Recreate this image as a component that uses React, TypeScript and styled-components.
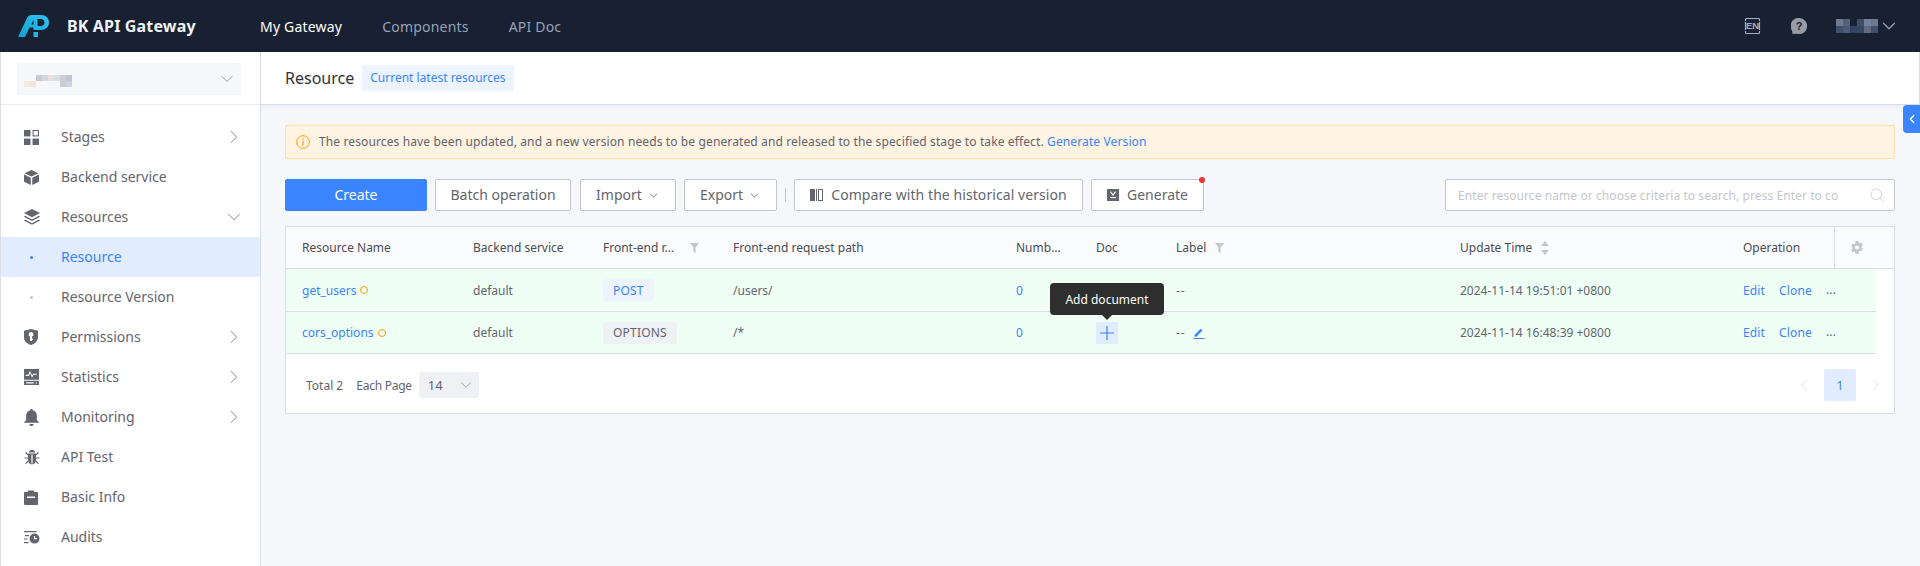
import React from "react";
import styled, { createGlobalStyle } from "styled-components";
import { ChevronDown, ChevronLeft, ChevronRight, Search } from "lucide-react";

const FONT = `"Noto Sans", "Noto Sans CJK SC", sans-serif`;

const Global = createGlobalStyle`
  html, body { margin: 0; padding: 0; height: 100%; overflow: hidden; background: #f5f7fa; }
  * { box-sizing: border-box; }
  body { font-family: ${FONT}; font-size: 14px; color: #63656e; }
`;

const Page = styled.div`
  display: flex;
  flex-direction: column;
  width: 1920px;
  height: 566px;
  overflow: hidden;
`;

const Header = styled.header`
  flex: 0 0 52px;
  display: flex;
  align-items: center;
  padding: 0 20px 0 18px;
  background: #182132;
`;

const LogoBox = styled.div`
  display: flex;
  align-items: center;
  width: 242px;
  gap: 18px;
`;

const Brand = styled.span`
  font-size: 16px;
  font-weight: 700;
  letter-spacing: 0.15px;
  color: #f0f3f8;
  white-space: nowrap;
`;

const Nav = styled.nav`
  display: flex;
  gap: 40px;
`;

const NavItem = styled.span<{ $active?: boolean }>`
  font-size: 14px;
  letter-spacing: 0.2px;
  color: ${(p) => (p.$active ? "#ffffff" : "#96a2b9")};
`;

const HeaderRight = styled.div`
  margin-left: auto;
  display: flex;
  align-items: center;
  color: #96a2b9;
`;

const Body = styled.div`
  flex: 1;
  display: flex;
  min-height: 0;
`;

const Sidebar = styled.aside`
  flex: 0 0 261px;
  background: #fff;
  border-left: 1px solid #dcdee5;
  border-right: 1px solid #dcdee5;
  display: flex;
  flex-direction: column;
`;

const GatewayPick = styled.div`
  height: 53px;
  padding: 11px 19px 0 16px;
  border-bottom: 1px solid #eaebf0;
`;

const GatewaySelect = styled.div`
  height: 32px;
  background: #f5f7fa;
  border-radius: 2px;
  display: flex;
  align-items: center;
  justify-content: space-between;
  padding: 0 4px 0 7px;
  color: #979ba5;
`;

const Menu = styled.ul`
  list-style: none;
  margin: 0;
  padding: 12px 0 0;
`;

const MenuRow = styled.li<{ $active?: boolean }>`
  height: 40px;
  display: flex;
  align-items: center;
  padding: 0 15px 0 23px;
  background: ${(p) => (p.$active ? "#e1ecff" : "transparent")};
  color: ${(p) => (p.$active ? "#3a84ff" : "#63656e")};
  font-size: 14px;
`;

const MenuIcon = styled.span`
  flex: 0 0 37px;
  display: flex;
  align-items: center;
  height: 16px;
`;

const Dot = styled.i<{ $active?: boolean }>`
  display: block;
  width: 3px;
  height: 3px;
  margin-left: 6px;
  border-radius: 50%;
  background: ${(p) => (p.$active ? "#3a84ff" : "#c4c6cc")};
`;

const MenuLabel = styled.span`
  flex: 1;
  padding-bottom: 2px;
`;

const MenuCaret = styled.span`
  display: flex;
  color: #979ba5;
`;

const Main = styled.main`
  flex: 1;
  min-width: 0;
  display: flex;
  flex-direction: column;
  position: relative;
`;

const TitleBar = styled.div`
  height: 53px;
  flex: none;
  background: #fff;
  border-bottom: 1px solid #dcdee5;
  border-right: 1px solid #dcdee5;
  box-shadow: 0 3px 4px rgba(64, 112, 203, 0.06);
  display: flex;
  align-items: center;
  padding: 0 0 1px 24px;
  gap: 8px;
`;

const PageTitle = styled.h1`
  margin: 0;
  font-size: 16px;
  font-weight: 400;
  color: #313238;
`;

const TitleTag = styled.span`
  height: 26px;
  display: flex;
  align-items: center;
  padding: 0 8px;
  background: #edf4ff;
  border-radius: 2px;
  font-size: 12px;
  color: #3a84ff;
`;

const CollapseTab = styled.div`
  position: absolute;
  top: 53px;
  right: 0;
  width: 17px;
  height: 28px;
  background: #3a84ff;
  border-radius: 4px 0 0 4px;
  display: flex;
  align-items: center;
  justify-content: center;
  color: #fff;
`;

const Content = styled.div`
  padding: 20px 25px 0 24px;
  display: flex;
  flex-direction: column;
`;

const Alert = styled.div`
  height: 34px;
  display: flex;
  align-items: center;
  gap: 9px;
  padding: 0 10px;
  background: #fff3e1;
  border: 1px solid #ffdfac;
  border-radius: 2px;
  font-size: 12px;
  letter-spacing: 0.12px;
`;

const AlertText = styled.span`
  padding-bottom: 1px;
`;

const TextLink = styled.span`
  color: #3a84ff;
`;

const Toolbar = styled.div`
  display: flex;
  align-items: center;
  margin-top: 20px;
  gap: 8px;
`;

const Btn = styled.button<{ $primary?: boolean; $w: number; $nudge?: number; $track?: number }>`
  position: relative;
  width: ${(p) => p.$w}px;
  margin-left: ${(p) => p.$nudge ?? 0}px;
  height: 32px;
  padding: 0 0 2px;
  display: flex;
  align-items: center;
  justify-content: center;
  gap: 5px;
  font: inherit;
  font-size: 14px;
  letter-spacing: ${(p) => p.$track ?? 0}px;
  border-radius: 2px;
  border: 1px solid ${(p) => (p.$primary ? "#3a84ff" : "#c4c6cc")};
  background: ${(p) => (p.$primary ? "#3a84ff" : "#fff")};
  color: ${(p) => (p.$primary ? "#fff" : "#63656e")};
`;

const BtnCaret = styled(ChevronDown)`
  margin-top: 2px;
`;

const BtnGlyph = styled.svg`
  margin-right: 3px;
  margin-top: 2px;
`;

const RedDot = styled.i`
  position: absolute;
  top: -3px;
  right: -2px;
  width: 6px;
  height: 6px;
  border-radius: 50%;
  background: #ea3636;
`;

const Divider = styled.i`
  width: 1px;
  height: 14px;
  background: #c4c6cc;
`;

const SearchBox = styled.div`
  margin-left: auto;
  width: 450px;
  height: 32px;
  display: flex;
  align-items: center;
  justify-content: space-between;
  padding: 0 9px 0 12px;
  background: #fff;
  border: 1px solid #c4c6cc;
  border-radius: 2px;
  font-size: 12px;
  letter-spacing: 0.08px;
  color: #c4c6cc;
  white-space: nowrap;
`;

const Table = styled.section`
  margin-top: 15px;
  background: #fff;
  border: 1px solid #dcdee5;
`;

const COLS = "171px 130px 130px 283px 80px 80px 284px 283px";

const HeadRow = styled.div`
  display: grid;
  grid-template-columns: ${COLS} 107px 60px;
  height: 42px;
  background: #fafbfd;
  border-bottom: 1px solid #dcdee5;
  font-size: 12px;
  color: #313238;
`;

const DataRow = styled.div<{ $h: number }>`
  display: grid;
  grid-template-columns: ${COLS} 149px;
  width: 1590px;
  height: ${(p) => p.$h}px;
  background: #f0fff5;
  border-bottom: 1px solid #dcdee5;
  font-size: 12px;
  position: relative;
`;

const Cell = styled.div`
  display: flex;
  align-items: center;
  padding-left: 16px;
  gap: 4px;
  min-width: 0;
  white-space: nowrap;
`;

const HeadCell = styled(Cell)`
  color: #4a4c53;
  gap: 0;
`;

const HeadFilter = styled.span<{ $gap: number }>`
  margin-left: ${(p) => p.$gap}px;
  display: flex;
`;

const HeadSort = styled.svg`
  margin-left: 8px;
`;

const GearCell = styled.div`
  display: flex;
  align-items: center;
  justify-content: center;
  border-left: 1px solid #dcdee5;
  padding-right: 16px;
`;

const StatusRing = styled.i`
  display: block;
  width: 8px;
  height: 8px;
  border: 1.5px solid #ff9c01;
  border-radius: 50%;
`;

const MethodTag = styled.span<{ $blue?: boolean }>`
  height: 22px;
  display: flex;
  align-items: center;
  padding: 0 10px;
  border-radius: 2px;
  letter-spacing: 0.2px;
  background: ${(p) => (p.$blue ? "#edf4ff" : "#f0f1f5")};
  color: ${(p) => (p.$blue ? "#3a84ff" : "#63656e")};
`;

const AddDoc = styled.span`
  width: 22px;
  height: 22px;
  background: #e1ecff;
  display: flex;
  align-items: center;
  justify-content: center;
`;

const Dashes = styled.span`
  letter-spacing: 1px;
`;

const EditGlyph = styled.svg`
  margin-left: 3px;
`;

const Tip = styled.div`
  position: absolute;
  left: 764px;
  top: -29px;
  width: 114px;
  height: 32px;
  display: flex;
  align-items: center;
  justify-content: center;
  background: #2e2e2e;
  border-radius: 4px;
  color: #fff;
  font-size: 12px;
  z-index: 2;
  &::after {
    content: "";
    position: absolute;
    left: 52px;
    bottom: -5px;
    border-left: 5px solid transparent;
    border-right: 5px solid transparent;
    border-top: 5px solid #2e2e2e;
  }
`;

const OpLinks = styled.div`
  display: flex;
  align-items: center;
  gap: 14px;
  letter-spacing: 0.15px;
  color: #3a84ff;
`;

const More = styled.span`
  color: #63656e;
  margin-top: -2px;
`;

const Pager = styled.div`
  height: 59px;
  display: flex;
  align-items: center;
  padding: 3px 8px 0 20px;
  font-size: 12px;
`;

const PerPage = styled.span`
  margin-left: 13px;
  letter-spacing: -0.25px;
`;

const PageSelect = styled.div`
  margin-left: 7px;
  width: 60px;
  height: 26px;
  background: #f0f1f5;
  border-radius: 2px;
  display: flex;
  align-items: center;
  justify-content: space-between;
  padding: 0 4px 0 9px;
  color: #63656e;
  font-size: 13px;
`;

const PageNav = styled.div`
  margin-left: auto;
  display: flex;
  align-items: center;
  gap: 10px;
  color: #dcdee5;
`;

const PageNum = styled.span`
  width: 32px;
  height: 32px;
  display: flex;
  align-items: center;
  justify-content: center;
  background: #e1ecff;
  border-radius: 2px;
  color: #3a84ff;
  font-size: 12px;
`;

const UserMosaic = styled.svg`
  margin-left: 29px;
`;

const HelpIcon = styled.svg`
  margin-left: 30px;
`;

const c = "#63656e";

const Icons: Record<string, React.ReactNode> = {
  stages: (
    <svg width="15" height="15" viewBox="0 0 14 14">
      <rect x="0" y="0" width="6" height="6" fill={c} />
      <rect x="8.5" y="0.5" width="5" height="5" fill="none" stroke={c} />
      <rect x="0" y="8" width="6" height="6" fill={c} />
      <rect x="8" y="8" width="6" height="6" fill={c} />
    </svg>
  ),
  backend: (
    <svg width="15" height="15" viewBox="0 0 14 14">
      <path d="M7 0 13.5 3 7 6 .5 3Z" fill={c} />
      <path d="M0 4.3 6.3 7.2V14L0 11Z" fill={c} />
      <path d="M14 4.3 7.7 7.2V14L14 11Z" fill={c} />
    </svg>
  ),
  resources: (
    <svg width="16" height="16" viewBox="0 0 14 14">
      <path d="M7 0 14 3.6 7 7.2 0 3.6Z" fill={c} />
      <path d="M1 6 7 9.2 13 6 14 6.8 7 10.6 0 6.8Z" fill={c} />
      <path d="M1 9.2 7 12.4 13 9.2 14 10 7 13.8 0 10Z" fill={c} />
    </svg>
  ),
  permissions: (
    <svg width="14" height="16" viewBox="0 0 14 16">
      <path fillRule="evenodd" d="M7 0 14 1.8V8c0 4-3 6.6-7 8-4-1.4-7-4-7-8V1.8ZM7 3a2.4 2.4 0 0 0-1 4.6V12h2v-1h1V9.5H8V7.6A2.4 2.4 0 0 0 7 3Z" fill={c} />
    </svg>
  ),
  statistics: (
    <svg width="15" height="16" viewBox="0 0 14 15">
      <path fillRule="evenodd" d="M0 0h14v10H0ZM1.5 5.5v1h3l1.2-2.4 1.8 4 1.5-2.6h3v-1H8.5l-.9 1.5-2-4.2L3.8 5.5Z" fill={c} />
      <path fillRule="evenodd" d="M0 11h14v4H0Zm2 1.5v1h7v-1Zm9 0v1h1v-1Z" fill={c} />
    </svg>
  ),
  monitoring: (
    <svg width="15" height="17" viewBox="0 0 14 16">
      <path d="M7 0c.7 0 1.2.5 1.2 1.1C10.6 1.7 12 3.7 12 6v4.4l2 2.1V13H0v-.5l2-2.1V6c0-2.3 1.4-4.3 3.8-4.9C5.8.5 6.3 0 7 0Z" fill={c} />
      <path d="M5 14h4c0 1.2-1 2-2 2s-2-.8-2-2Z" fill={c} />
    </svg>
  ),
  test: (
    <svg width="16" height="16" viewBox="0 0 16 16">
      <path d="M5 3.6C5 1.8 6.3.8 8 .8s3 1 3 2.8Z" fill={c} />
      <path fillRule="evenodd" d="M4 4.6h8V11c0 2.7-1.8 4.4-4 4.4S4 13.7 4 11Zm3.4 1v9h1.2v-9Z" fill={c} />
      <path d="M4 5.8 1.5 3.5M12 5.8l2.5-2.3M4 9H.5M12 9h3.5M4.3 12 1.5 14.6M11.7 12l2.8 2.6" stroke={c} strokeWidth="1.2" fill="none" />
    </svg>
  ),
  info: (
    <svg width="14" height="15" viewBox="0 0 14 15">
      <path fillRule="evenodd" d="M1 2h3V.5h6V2h3a1 1 0 0 1 1 1v11a1 1 0 0 1-1 1H1a1 1 0 0 1-1-1V3a1 1 0 0 1 1-1Zm2 4.5V8h8V6.5Z" fill={c} />
    </svg>
  ),
  audits: (
    <svg width="16" height="15" viewBox="0 0 16 15">
      <path d="M0 1h12.5v1.2H0ZM1 5h4v1.2H1ZM0 8.4h3.6v1.2H0ZM0 12h4.5v1.2H0Z" fill={c} />
      <path fillRule="evenodd" d="M10.5 3.6a5 5 0 1 1 0 10 5 5 0 0 1 0-10ZM10 6v3.2h3V8.1h-2V6Z" fill={c} />
    </svg>
  ),
};

type MenuDef = { key?: string; label: string; caret?: "right" | "down"; sub?: boolean; active?: boolean };

const menu: MenuDef[] = [
  { key: "stages", label: "Stages", caret: "right" },
  { key: "backend", label: "Backend service" },
  { key: "resources", label: "Resources", caret: "down" },
  { label: "Resource", sub: true, active: true },
  { label: "Resource Version", sub: true },
  { key: "permissions", label: "Permissions", caret: "right" },
  { key: "statistics", label: "Statistics", caret: "right" },
  { key: "monitoring", label: "Monitoring", caret: "right" },
  { key: "test", label: "API Test" },
  { key: "info", label: "Basic Info" },
  { key: "audits", label: "Audits" },
];

const Logo = () => (
  <svg width="31" height="22" viewBox="0 0 31 22">
    <defs>
      <linearGradient id="lg" x1="0" y1="1" x2="1" y2="0">
        <stop offset="0" stopColor="#0f9fd2" />
        <stop offset="1" stopColor="#32c4f4" />
      </linearGradient>
    </defs>
    <path
      fillRule="evenodd"
      d="M0 22 9 3C10 1 11.5 0 13.5 0H23C28 0 31 3 31 7.5 31 12 27.5 15 23 15H19.5V11H22.5C25 11 26.5 9.5 26.5 7.5 26.5 5.5 25 4 22.5 4H19.5V15H15.5V12.5H11.5L7 22ZM15.5 5V9.5H13.3Z"
      fill="url(#lg)"
    />
    <rect x="15.5" y="17" width="4.5" height="5" fill="#22b5e8" />
  </svg>
);

const mosaic = (cells: [number, number, string][], s: number) =>
  cells.map(([x, y, f], i) => <rect key={i} x={x * s} y={y * s} width={s} height={s} fill={f} />);

const Filter = () => (
  <svg width="9" height="10" viewBox="0 0 9 10">
    <path d="M0 0h9L5.6 4.5V10L3.4 8.6V4.5Z" fill="#c4c6cc" />
  </svg>
);

const Edit = () => (
  <EditGlyph width="12" height="12" viewBox="0 0 12 12">
    <path d="M1.5 8 7.6 1.8 9.4 3.6 3.3 9.8H1.5Z" fill="#3a84ff" />
    <rect x="0.5" y="11" width="11" height="1" fill="#3a84ff" />
  </EditGlyph>
);

const columns = ["Resource Name", "Backend service", "Front-end r...", "Front-end request path", "Numb...", "Doc", "Label", "Update Time", "Operation"];

export default function App() {
  return (
    <Page>
      <Global />
      <Header>
        <LogoBox>
          <Logo />
          <Brand>BK API Gateway</Brand>
        </LogoBox>
        <Nav>
          <NavItem $active>My Gateway</NavItem>
          <NavItem>Components</NavItem>
          <NavItem>API Doc</NavItem>
        </Nav>
        <HeaderRight>
          <svg width="17" height="18" viewBox="0 0 17 18">
            <path d="M1.5 4V2.5a1 1 0 0 1 1-1h12a1 1 0 0 1 1 1V4M1.5 14v1.5a1 1 0 0 0 1 1h12a1 1 0 0 0 1-1V14M1.5 5v8M15.5 5v8" stroke="#a3aec2" strokeWidth="1.2" fill="none" />
            <text x="8.5" y="12.4" textAnchor="middle" fontSize="9.5" fontWeight="700" fill="#a3aec2" fontFamily="Liberation Sans, sans-serif">EN</text>
          </svg>
          <HelpIcon width="16" height="16" viewBox="0 0 16 16">
            <path d="M8 0a8 8 0 1 1-2 15.7L1.5 16 1 12.5A8 8 0 0 1 8 0Z" fill="#979ba5" />
            <text x="8" y="12" textAnchor="middle" fontSize="11" fontWeight="700" fill="#182132" fontFamily="Liberation Sans, sans-serif">?</text>
          </HelpIcon>
          <UserMosaic width="42" height="14" viewBox="0 0 42 14">
            {mosaic(
              [
                [0, 0, "#6e7a8f"], [1, 0, "#56627a"], [3, 0, "#3f4d66"], [4, 0, "#75809a"], [5, 0, "#6b7790"],
                [0, 1, "#414f6a"], [1, 1, "#4b5a72"], [2, 1, "#2f4663"], [3, 1, "#34495f"], [4, 1, "#606b80"], [5, 1, "#3f5168"], [6, 1, "#26405f"],
              ],
              7,
            )}
          </UserMosaic>
          <ChevronDown size={22} strokeWidth={1.3} />
        </HeaderRight>
      </Header>
      <Body>
        <Sidebar>
          <GatewayPick>
            <GatewaySelect>
              <svg width="48" height="20" viewBox="0 0 48 20">
                {mosaic(
                  [
                    [2, 1, "#c6cbd6"], [3, 1, "#d3d6de"], [4, 1, "#e6dfda"], [5, 1, "#d6dfec"], [6, 1, "#d2ccd0"], [7, 1, "#bfc4ce"],
                    [0, 2, "#f7e9dd"], [1, 2, "#f3e4d8"], [5, 2, "#f5f7fa"], [6, 2, "#c8ccd6"], [7, 2, "#c8d2e2"],
                  ],
                  6,
                )}
              </svg>
              <ChevronDown size={20} strokeWidth={1.2} />
            </GatewaySelect>
          </GatewayPick>
          <Menu>
            {menu.map((m) => (
              <MenuRow key={m.label} $active={m.active}>
                <MenuIcon>{m.sub ? <Dot $active={m.active} /> : Icons[m.key!]}</MenuIcon>
                <MenuLabel>{m.label}</MenuLabel>
                {m.caret && (
                  <MenuCaret>
                    {m.caret === "right" ? <ChevronRight size={22} strokeWidth={1.1} /> : <ChevronDown size={22} strokeWidth={1.1} />}
                  </MenuCaret>
                )}
              </MenuRow>
            ))}
          </Menu>
        </Sidebar>
        <Main>
          <TitleBar>
            <PageTitle>Resource</PageTitle>
            <TitleTag>Current latest resources</TitleTag>
          </TitleBar>
          <CollapseTab>
            <ChevronLeft size={14} strokeWidth={2.2} />
          </CollapseTab>
          <Content>
            <Alert>
              <svg width="14" height="14" viewBox="0 0 14 14">
                <circle cx="7" cy="7" r="6.3" fill="none" stroke="#ff9c01" />
                <rect x="6.4" y="5.8" width="1.2" height="4.8" fill="#ff9c01" />
                <rect x="6.4" y="3.4" width="1.2" height="1.3" fill="#ff9c01" />
              </svg>
              <AlertText>
                The resources have been updated, and a new version needs to be generated and released to the specified stage to take effect.{" "}
                <TextLink>Generate Version</TextLink>
              </AlertText>
            </Alert>
            <Toolbar>
              <Btn $primary $w={142}>Create</Btn>
              <Btn $w={136}>Batch operation</Btn>
              <Btn $w={96} $nudge={1}>Import <BtnCaret size={13} strokeWidth={1.6} /></Btn>
              <Btn $w={93}>Export <BtnCaret size={13} strokeWidth={1.6} /></Btn>
              <Divider />
              <Btn $w={289} $track={0.07}>
                <BtnGlyph width="13" height="12" viewBox="0 0 13 12">
                  <rect x="0" y="0" width="5" height="12" fill={c} />
                  <rect x="6" y="0" width="1" height="12" fill={c} />
                  <rect x="8.5" y="0.5" width="4" height="11" fill="none" stroke={c} />
                </BtnGlyph>
                Compare with the historical version
              </Btn>
              <Btn $w={113}>
                <BtnGlyph width="12" height="12" viewBox="0 0 12 12">
                  <rect width="12" height="12" fill={c} />
                  <path d="M3.4 2.6 6 6l2.6-3.4" stroke="#fff" fill="none" strokeWidth="1.1" />
                  <rect x="3" y="8" width="6" height="1.1" fill="#fff" />
                </BtnGlyph>
                Generate
                <RedDot />
              </Btn>
              <SearchBox>
                Enter resource name or choose criteria to search, press Enter to co
                <Search size={16} strokeWidth={1.1} color="#c4c6cc" />
              </SearchBox>
            </Toolbar>
            <Table>
              <HeadRow>
                {columns.map((h) => (
                  <HeadCell key={h}>
                    {h}
                    {h === "Front-end r..." && <HeadFilter $gap={16}><Filter /></HeadFilter>}
                    {h === "Label" && <HeadFilter $gap={9}><Filter /></HeadFilter>}
                    {h === "Update Time" && (
                      <HeadSort width="10" height="14" viewBox="0 0 10 14">
                        <path d="M5 0 9 5H1ZM5 14 1 9h8Z" fill="#c4c6cc" />
                      </HeadSort>
                    )}
                  </HeadCell>
                ))}
                <GearCell>
                  <svg width="12" height="13" viewBox="0 0 12 13">
                    <path fillRule="evenodd" d="M4.6 0h2.8l.3 1.6 1.2.7 1.5-.5 1.4 2.4-1.2 1.1v1.4l1.2 1.1-1.4 2.4-1.5-.5-1.2.7L7.4 13H4.6l-.3-1.6-1.2-.7-1.5.5L.2 8.8l1.2-1.1V6.3L.2 5.2l1.4-2.4 1.5.5 1.2-.7ZM6 4.4a2.1 2.1 0 1 0 0 4.2 2.1 2.1 0 0 0 0-4.2Z" fill="#c4c6cc" />
                  </svg>
                </GearCell>
              </HeadRow>
              <DataRow $h={43}>
                <Cell><TextLink>get_users</TextLink><StatusRing /></Cell>
                <Cell>default</Cell>
                <Cell><MethodTag $blue>POST</MethodTag></Cell>
                <Cell>/users/</Cell>
                <Cell><TextLink>0</TextLink></Cell>
                <Cell />
                <Cell><Dashes>--</Dashes></Cell>
                <Cell>2024-11-14 19:51:01 +0800</Cell>
                <Cell><OpLinks><span>Edit</span><span>Clone</span><More>...</More></OpLinks></Cell>
              </DataRow>
              <DataRow $h={42}>
                <Cell><TextLink>cors_options</TextLink><StatusRing /></Cell>
                <Cell>default</Cell>
                <Cell><MethodTag>OPTIONS</MethodTag></Cell>
                <Cell>/*</Cell>
                <Cell><TextLink>0</TextLink></Cell>
                <Cell>
                  <AddDoc>
                    <svg width="14" height="14" viewBox="0 0 14 14">
                      <path d="M7 0v14M0 7h14" stroke="#3a84ff" strokeWidth="1.2" />
                    </svg>
                  </AddDoc>
                </Cell>
                <Cell><Dashes>--</Dashes><Edit /></Cell>
                <Cell>2024-11-14 16:48:39 +0800</Cell>
                <Cell><OpLinks><span>Edit</span><span>Clone</span><More>...</More></OpLinks></Cell>
                <Tip>Add document</Tip>
              </DataRow>
              <Pager>
                <span>Total 2</span>
                <PerPage>Each Page</PerPage>
                <PageSelect>14 <ChevronDown size={18} strokeWidth={1.2} color="#979ba5" /></PageSelect>
                <PageNav>
                  <ChevronLeft size={20} strokeWidth={1.2} />
                  <PageNum>1</PageNum>
                  <ChevronRight size={20} strokeWidth={1.2} />
                </PageNav>
              </Pager>
            </Table>
          </Content>
        </Main>
      </Body>
    </Page>
  );
}
